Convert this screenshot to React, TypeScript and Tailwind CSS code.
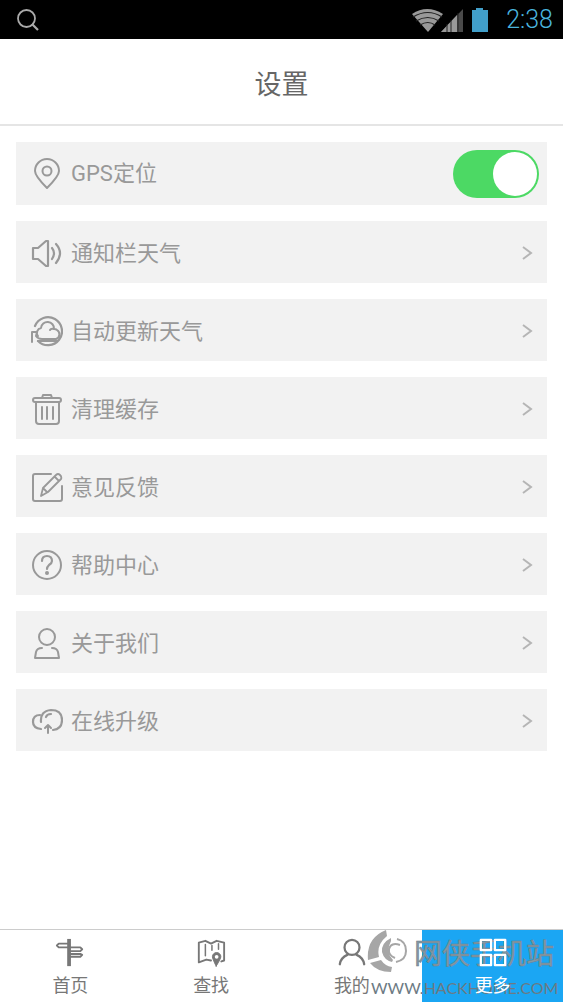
import { useState } from "react";
import type { ReactNode } from "react";

type Item = { label: string; icon: ReactNode };

const items: Item[] = [
  {
    label: "通知栏天气",
    icon: (
      <>
        <path d="M2 11h5l8-7h2v25h-2l-8-7H2z" strokeWidth="2.2" />
        <path d="M21 11q4 5 0 11M25 7q8 9 0 19" strokeWidth="2.2" />
      </>
    ),
  },
  {
    label: "自动更新天气",
    icon: (
      <>
        <path d="M4 11a14 14 0 1 1 3 15" strokeWidth="2.2" />
        <path
          d="M1 27V17h5l-1 4q2 3 6 3h14a5 5 0 0 0 1-9q-1-1-3-1a6.500 6.500 0 0 0-13-1 5 5 0 0 0-3 8M19 15q1-2 4-1"
          strokeWidth="2"
        />
        <path d="M7 26h19" />
      </>
    ),
  },
  {
    label: "清理缓存",
    icon: (
      <>
        <path d="M11 5l1-3h8l1 3M4 5h24q2 0 2 2t-2 2H4Q2 9 2 7t2-2z" />
        <path d="M5 9v19q0 3 3 3h17q3 0 3-3V9M11 14v12M16 14v12M22 14v12" />
      </>
    ),
  },
  {
    label: "意见反馈",
    icon: (
      <>
        <path d="M20 3H4q-2 0-2 2v23q0 2 2 2h25q2 0 2-2V15" />
        <path d="M10 25l2-8L25 4q2-2 4 0t1 4L17 21zM24 6l4 4M12 17l4 4" strokeWidth="1.8" />
      </>
    ),
  },
  {
    label: "帮助中心",
    icon: (
      <>
        <circle cx="16" cy="16" r="14" />
        <path d="M11 12q0-5 5-5t5 5q0 2-3 4-2 2-2 4" strokeWidth="2.2" />
        <circle cx="16" cy="24" r="1" fill="currentColor" />
      </>
    ),
  },
  {
    label: "关于我们",
    icon: (
      <>
        <circle cx="16" cy="10" r="8" />
        <path d="M11 21q-5 0-6 4l-1 6h24l-1-6q-1-4-6-4" />
      </>
    ),
  },
  {
    label: "在线升级",
    icon: (
      <>
        <path d="M9 10q-7 0-7 7 0 6 8 7" strokeWidth="2.2" />
        <path d="M10 17q-1-11 10-12 11 0 11 10 0 9-9 10M15 12q1-3 5-3" strokeWidth="2.2" />
        <path d="M17 28v-8M14 23l3-3 3 3" />
      </>
    ),
  },
];

const tabs: Item[] = [
  {
    label: "首页",
    icon: (
      <>
        <path d="M15 1v29" strokeWidth="4" strokeLinecap="butt" />
        <path d="M15 6H4L2 8l2 2h11M15 10h12l2 2-2 2H15M15 17h12l2 1-2 2H15" />
      </>
    ),
  },
  {
    label: "查找",
    icon: (
      <>
        <path d="M16 24l-5-1-8 3V5l7-2 6 3 6-3 8 2v19l-3 1" />
        <path d="M10 7v12M17 8v5M24 6v6" strokeWidth="1.6" />
        <path d="M21.500 30q-4-8-4-10a4.500 4.500 0 0 1 9 0q0 2-5 10z" fill="currentColor" strokeWidth="1" />
        <circle cx="22" cy="20" r="2" fill="white" stroke="none" />
      </>
    ),
  },
  {
    label: "我的",
    icon: (
      <>
        <circle cx="16" cy="10" r="8" strokeWidth="2.4" />
        <path d="M3 28q1-7 8-10M21 18q7 3 8 10" strokeWidth="2.4" />
      </>
    ),
  },
  {
    label: "更多",
    icon: <path d="M3 2h11v11H3zM18 2h11v11H18zM3 18h11v11H3zM18 18h11v11H18z" strokeWidth="2.4" />,
  },
];

function Icon({ children, className }: { children: ReactNode; className: string }) {
  return (
    <svg
      viewBox="0 0 32 32"
      className={className}
      fill="none"
      stroke="currentColor"
      strokeWidth="2"
      strokeLinejoin="round"
      strokeLinecap="round"
      aria-hidden="true"
    >
      {children}
    </svg>
  );
}

function StatusBar() {
  return (
    <div className="h-[39px] bg-black flex items-center justify-between pl-4 pr-[10px]">
      <svg viewBox="0 0 24 24" className="w-6 h-6" fill="none" stroke="#aaa" strokeWidth="1.8" aria-hidden="true">
        <circle cx="10.500" cy="10.500" r="8.500" />
        <path d="M16 16l6 6" strokeWidth="2.2" />
      </svg>
      <div className="flex items-center">
        <svg viewBox="0 0 78 26" className="w-[78px] h-[26px]" aria-hidden="true">
          <path d="M1 7Q16-3 32 7L17 25z" fill="#999" />
          <path d="M2 10q15-9 29 0M5 14q12-7 23 0M9 18q8-5 15 0" fill="none" stroke="#222" strokeWidth="1.2" />
          <path d="M30 25L52 2v23z" fill="#4a4a4a" />
          <path d="M30 25L46 8v17z" fill="#999" />
          <path d="M36 17v8M40 13v12M47 6v19" stroke="#222" />
          <path d="M61 3h4V1h7v2h5v22H61z" fill="#419fca" />
        </svg>
        <span className="w-[64px] text-right text-[25px] font-light text-[#4ab4de] font-['Roboto',sans-serif]">
          2:38
        </span>
      </div>
    </div>
  );
}

// Site mark, sits between the tab backgrounds and their icons
function Watermark() {
  return (
    <div className="absolute right-0 bottom-0 w-[196px] h-[74px] pointer-events-none">
      <svg viewBox="0 0 196 74" className="w-full h-full" aria-hidden="true">
        <g fill="#a6a6a6">
          <path d="M19 2Q-1 10 1 32l11-3Q9 17 20 8z" />
          <path d="M3 35l11-3q4 6 11 7l-1 5Q10 44 3 35z" />
          <path d="M24 10Q14 15 15 24q2 8 10 10l1-2q-8-8-2-19z" />
        </g>
        <path d="M30 11q9 2 9 12 0 9-10 11" fill="none" stroke="#a6a6a6" strokeWidth="2" />
        <path d="M33 17q-9-3-11 4-1 6 6 9" fill="none" stroke="#a6a6a6" strokeWidth="2" />
        <text x="47" y="36" fontSize="28" fill="#8498a4" stroke="#6f7f89" strokeWidth="0.500" fontFamily="Noto Sans CJK SC, sans-serif">
          网侠手机站
        </text>
        <text x="4" y="66" fontSize="16" fill="#6c7a83" fontFamily="Lato, sans-serif">
          WWW.HACKHOME.COM
        </text>
      </svg>
    </div>
  );
}

export default function App() {
  const [gps, setGps] = useState(true);
  const [active, setActive] = useState("更多");

  return (
    <div className="min-h-screen flex flex-col bg-white text-[#999] font-['Roboto','Noto_Sans_CJK_SC',sans-serif]">
      <StatusBar />
      <header className="h-[87px] flex items-center justify-center pt-2 border-b-2 border-[#e5e5e5]">
        <h1 className="text-[27px] text-[#666]">设置</h1>
      </header>

      <main className="flex-1 flex flex-col gap-4 p-4">
        <label className="h-[63px] flex items-center bg-[#f2f2f2] pl-[15px] pr-2 cursor-pointer">
          <Icon className="w-8 h-8 mr-2">
            <path d="M16 30Q4 18 4 13a12 12 0 0 1 24 0q0 5-12 17z" />
            <circle cx="16" cy="13" r="4.500" />
          </Icon>
          <span className="flex-1 text-[22px]">GPS定位</span>
          <input
            type="checkbox"
            role="switch"
            checked={gps}
            onChange={(e) => setGps(e.target.checked)}
            className="peer sr-only"
          />
          <span className="w-[86px] h-12 p-[2px] rounded-full flex bg-gray-300 peer-checked:bg-[#4cd964] peer-checked:justify-end">
            <span className="w-11 h-11 rounded-full bg-white" />
          </span>
        </label>
        {items.map((item) => (
          <button key={item.label} className="h-[62px] flex items-center bg-[#f2f2f2] pl-[15px] pr-3 pt-[2px] text-left">
            <Icon className="w-8 h-8 mr-2">{item.icon}</Icon>
            <span className="flex-1 text-[22px]">{item.label}</span>
            <svg viewBox="0 0 16 16" className="w-4 h-4" fill="none" stroke="#b5b5b5" strokeWidth="2" aria-hidden="true">
              <path d="M4 2l8 6-8 6" />
            </svg>
          </button>
        ))}
      </main>

      <nav className="relative h-[73px] grid grid-cols-4 border-t border-[#ccc]">
        {tabs.map((tab) => (
          <button
            key={tab.label}
            onClick={() => setActive(tab.label)}
            className={`flex flex-col items-center pt-2 ${
              active === tab.label ? "bg-[#1ba6f3] text-white" : "text-[#777]"
            }`}
          >
            <Icon className="relative z-10 w-[30px] h-[30px]">{tab.icon}</Icon>
            <span className="relative z-10 text-lg leading-9">{tab.label}</span>
          </button>
        ))}
        <Watermark />
      </nav>
    </div>
  );
}
